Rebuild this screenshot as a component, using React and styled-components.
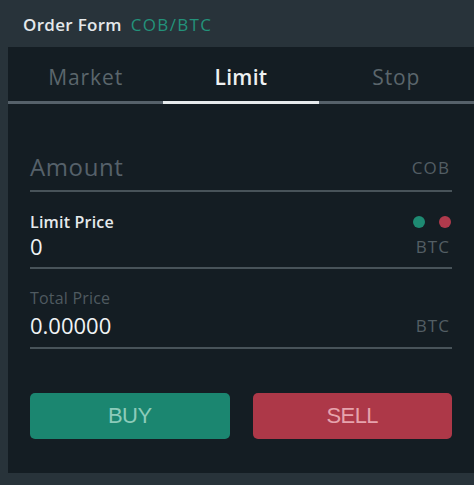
import React, { useState } from 'react';
import styled, { createGlobalStyle } from 'styled-components';

const GlobalStyle = createGlobalStyle`
  html, body {
    margin: 0;
    padding: 0;
    background: #28333a;
    font-family: "Open Sans", "DejaVu Sans", sans-serif;
  }
  * { box-sizing: border-box; }
`;

const Page = styled.div`
  width: 474px;
  height: 485px;
  background: #28333a;
  overflow: hidden;
`;

const Header = styled.div`
  height: 47px;
  display: flex;
  align-items: center;
  padding: 2px 0 0 23px;
  font-size: 17px;
  line-height: 20px;
`;

const Title = styled.span`
  color: #e4e8ea;
  font-weight: 600;
  letter-spacing: 0.3px;
  margin-right: 9px;
`;

const Pair = styled.span`
  color: #23927a;
  letter-spacing: 1.3px;
`;

const Panel = styled.div`
  margin-left: 8px;
  height: 426px;
  background: #141d23;
  display: flex;
  flex-direction: column;
`;

const Tabs = styled.div`
  display: grid;
  grid-template-columns: repeat(3, 1fr);
  height: 57px;
  border-bottom: 3px solid #56616a;
`;

const Tab = styled.button`
  border: none;
  background: none;
  font-family: inherit;
  font-size: 21px;
  letter-spacing: ${(p) => (p.$active ? '0.3px' : '0.9px')};
  font-weight: ${(p) => (p.$active ? 600 : 400)};
  color: ${(p) => (p.$active ? '#eef1f2' : '#5b666c')};
  padding: 5px 0 0;
  margin-bottom: -3px;
  border-bottom: 3px solid ${(p) => (p.$active ? '#e6eaec' : 'transparent')};
  cursor: pointer;
`;

const Form = styled.div`
  padding: 48px 22px 0;
  display: flex;
  flex-direction: column;
`;

const Field = styled.div`
  border-bottom: 2px solid #485359;
  padding-bottom: ${(p) => p.$pad}px;
  margin-top: ${(p) => p.$top}px;
  display: flex;
  flex-direction: column;
  gap: ${(p) => p.$gap || 0}px;
`;

const Row = styled.div`
  display: flex;
  justify-content: space-between;
  align-items: center;
`;

const Placeholder = styled.span`
  font-size: 24px;
  line-height: 30px;
  color: #56616a;
  letter-spacing: 0.6px;
`;

const Label = styled.span`
  font-size: 16px;
  line-height: 20px;
  font-weight: ${(p) => (p.$muted ? 400 : 600)};
  color: ${(p) => (p.$muted ? '#4f5a60' : '#e6eaec')};
  letter-spacing: 0.2px;
`;

const Value = styled.span`
  font-size: 22px;
  line-height: 28px;
  color: #f0f3f4;
`;

const Unit = styled.span`
  font-size: 17px;
  color: #535e64;
  letter-spacing: 1.1px;
  margin-right: 2px;
`;

const Dots = styled.div`
  display: flex;
  gap: 14px;
  margin-right: 1px;
`;

const Dot = styled.span`
  width: 12px;
  height: 12px;
  border-radius: 50%;
  background: ${(p) => p.$color};
`;

const Actions = styled.div`
  display: grid;
  grid-template-columns: 1fr 1fr;
  gap: 23px;
  margin-top: 44px;
`;

const ActionButton = styled.button`
  height: 46px;
  border: none;
  border-radius: 5px;
  background: ${(p) => p.$bg};
  color: ${(p) => p.$fg};
  font-family: "Liberation Sans", Arial, sans-serif;
  font-size: 22px;
  letter-spacing: -0.6px;
  cursor: pointer;
`;

const tabs = ['Market', 'Limit', 'Stop'];

export default function App() {
  const [tab, setTab] = useState('Limit');

  return (
    <Page>
      <GlobalStyle />
      <Header>
        <Title>Order Form</Title>
        <Pair>COB/BTC</Pair>
      </Header>
      <Panel>
        <Tabs>
          {tabs.map((t) => (
            <Tab key={t} type='button' $active={t === tab} onClick={() => setTab(t)}>
              {t}
            </Tab>
          ))}
        </Tabs>
        <Form>
          <Field $pad={8} $top={0}>
            <Row>
              <Placeholder>Amount</Placeholder>
              <Unit>COB</Unit>
            </Row>
          </Field>
          <Field $pad={7} $top={20}>
            <Row>
              <Label>Limit Price</Label>
              <Dots>
                <Dot $color='#1e8a72' />
                <Dot $color='#b03a4c' />
              </Dots>
            </Row>
            <Row>
              <Value>0</Value>
              <Unit>BTC</Unit>
            </Row>
          </Field>
          <Field $pad={8} $top={19} $gap={3}>
            <Row>
              <Label $muted>Total Price</Label>
            </Row>
            <Row>
              <Value>0.00000</Value>
              <Unit>BTC</Unit>
            </Row>
          </Field>
          <Actions>
            <ActionButton type='button' $bg='#1b8670' $fg='#8ccbba'>BUY</ActionButton>
            <ActionButton type='button' $bg='#ad3848' $fg='#e6a3ad'>SELL</ActionButton>
          </Actions>
        </Form>
      </Panel>
    </Page>
  );
}
